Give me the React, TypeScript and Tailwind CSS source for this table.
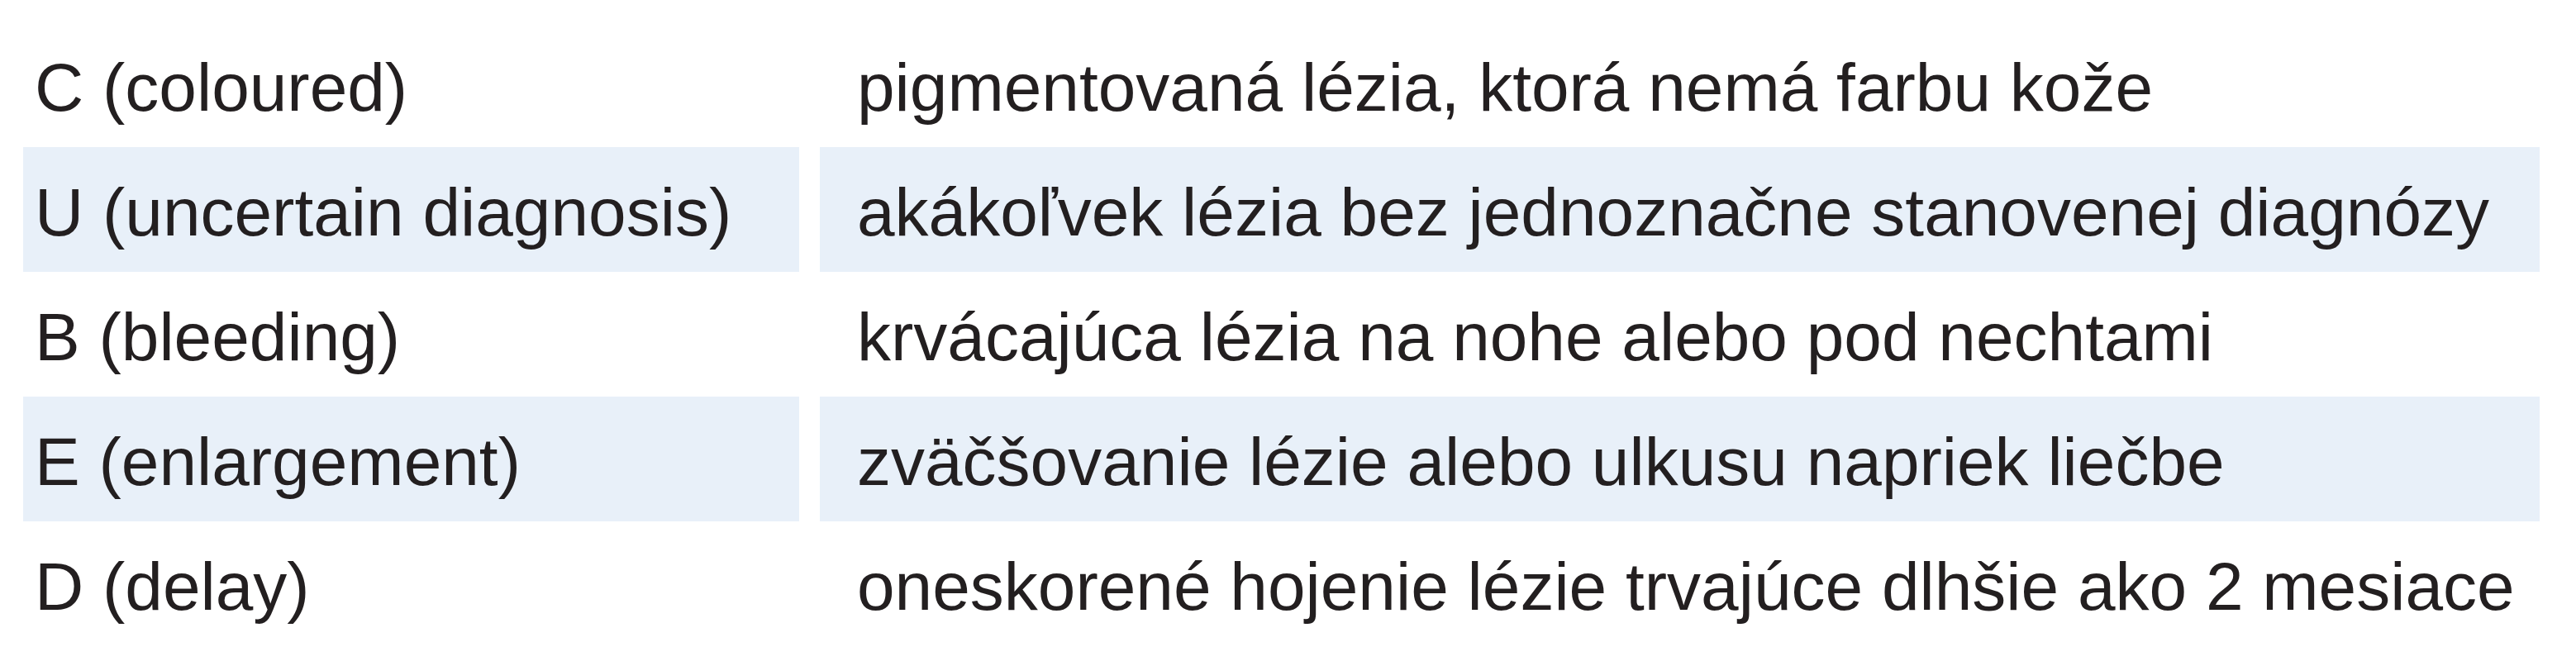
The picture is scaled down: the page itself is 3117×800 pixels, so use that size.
import React from 'react';

interface Row {
    code: string;
    text: string;
}

const rows: Row[] = [
    { code: 'C (coloured)', text: 'pigmentovaná lézia, ktorá nemá farbu kože' },
    { code: 'U (uncertain diagnosis)', text: 'akákoľvek lézia bez jednoznačne stanovenej diagnózy' },
    { code: 'B (bleeding)', text: 'krvácajúca lézia na nohe alebo pod nechtami' },
    { code: 'E (enlargement)', text: 'zväčšovanie lézie alebo ulkusu napriek liečbe' },
    { code: 'D (delay)', text: 'oneskorené hojenie lézie trvajúce dlhšie ako 2 mesiace' },
];

export default function App() {
    return (
        <div className="w-[3117px] h-[800px] bg-white pt-[27px] pl-[28px] font-['Liberation_Sans',Arial,sans-serif] text-[82px] text-[#231f20]">
            <div className="grid grid-cols-[939px_2081px] gap-x-[25px]">
                {rows.map((row, i) => {
                    const band = i % 2 === 1 ? 'bg-[#e8f0f9]' : 'bg-white';
                    return (
                        <React.Fragment key={row.code}>
                            <div className={`${band} h-[151px] pt-[6px] pl-[14px] leading-[145px] whitespace-nowrap`}>
                                {row.code}
                            </div>
                            <div className={`${band} h-[151px] pt-[6px] pl-[45px] leading-[145px] whitespace-nowrap`}>
                                {row.text}
                            </div>
                        </React.Fragment>
                    );
                })}
            </div>
        </div>
    );
}
